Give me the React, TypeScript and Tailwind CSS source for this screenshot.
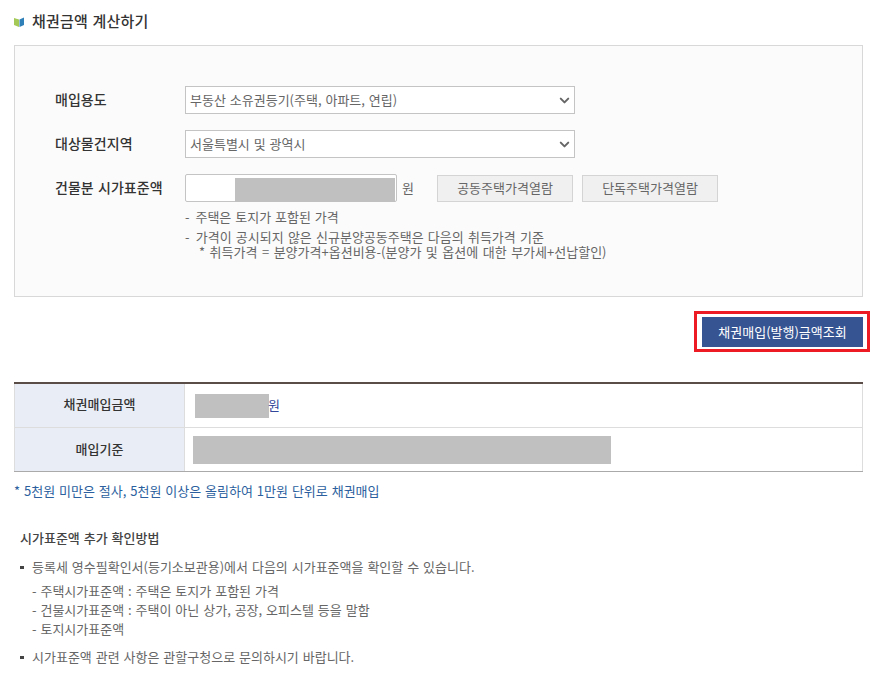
import { ChevronDown } from 'lucide-react'

const font = { fontFamily: '"Noto Sans CJK KR", "Noto Sans", sans-serif' }

function SelectBox({ value }: { value: string }) {
  return (
    <div className="flex h-[28px] w-[390px] items-center justify-between border border-[#c4c4c4] bg-white pl-[4px] pr-[2px] text-[13px] text-[#666]">
      <span>{value}</span>
      <ChevronDown size={15} strokeWidth={3.2} className="text-[#666]" />
    </div>
  )
}

function Label({ children }: { children: string }) {
  return <div className="w-[130px] shrink-0 pb-[1px] text-[14px] font-medium tracking-[0.05px] text-[#333]">{children}</div>
}

function Blocked({ className }: { className: string }) {
  return <div className={`bg-[#c0c0c0] ${className}`} />
}

export default function App() {
  return (
    <div className="h-[686px] w-[881px] overflow-hidden bg-white pl-[14px] pr-[18px] pt-[11px] text-[#555] [word-spacing:1px]" style={font}>
      <div className="flex h-[21px] items-center">
        <svg width="11" height="10" viewBox="0 0 11 10" className="mr-[7px]">
          <path d="M0 1 L5 2.5 V10 L0 8 Z" fill="#a4c957" />
          <path d="M5.5 2.5 L10 0.5 V8 L5.5 10 Z" fill="#2f7fb8" />
        </svg>
        <h2 className="text-[15px] font-medium tracking-[0.2px] text-[#333]">채권금액 계산하기</h2>
      </div>

      <div className="mt-[13px] h-[252px] border border-[#d8d8d8] bg-[#fbfbfb] pl-[40px] pt-[40px]">
        <div className="flex items-center">
          <Label>매입용도</Label>
          <SelectBox value="부동산 소유권등기(주택, 아파트, 연립)" />
        </div>
        <div className="mt-[16px] flex items-center">
          <Label>대상물건지역</Label>
          <SelectBox value="서울특별시 및 광역시" />
        </div>
        <div className="mt-[16px] flex items-center">
          <Label>건물분 시가표준액</Label>
          <div className="relative h-[28px] w-[212px] rounded-[2px] border border-[#c4c4c4] bg-white">
            <Blocked className="absolute left-[49px] top-[3px] h-[24px] w-[160px]" />
          </div>
          <span className="ml-[5px] w-[35px] pb-[1px] text-[13px] text-[#666]">원</span>
          <button className="h-[27px] w-[136px] border border-[#d4d4d4] bg-[#f0f0f0] pb-[1px] text-[13px] text-[#666]">공동주택가격열람</button>
          <button className="ml-[9px] h-[27px] w-[136px] border border-[#d4d4d4] bg-[#f0f0f0] pb-[1px] text-[13px] text-[#666]">단독주택가격열람</button>
        </div>
        <div className="ml-[130px] mt-[7px] text-[13px] leading-[15px] text-[#666]">
          <p>- <span className="ml-[2px]">주택은 토지가 포함된 가격</span></p>
          <p className="mt-[5px] [word-spacing:1.3px]">- <span className="ml-[2px]">가격이 공시되지 않은 신규분양공동주택은 다음의 취득가격 기준</span></p>
          <p className="pl-[14px] [word-spacing:1.6px]">* 취득가격 = 분양가격+옵션비용-(분양가 및 옵션에 대한 부가세+선납할인)</p>
        </div>
      </div>

      <div className="mt-[20px] flex justify-end">
        <div className="relative">
          <button className="h-[30px] w-[161px] bg-[#375492] text-[13px] text-white">채권매입(발행)금액조회</button>
          <div className="absolute -left-[8px] -right-[7px] -top-[6px] -bottom-[5px] border-[3px] border-[#ed1c24]" />
        </div>
      </div>

      <div className="mt-[35px] border-b border-t-2 border-b-[#aaa] border-t-[#5a4d48] text-[13px]">
        <div className="flex h-[44px] border-b border-[#ddd]">
          <div className="flex w-[171px] items-center justify-center border-x border-[#ddd] bg-[#e9edf5] pb-[3px] font-medium text-[#333]">채권매입금액</div>
          <div className="flex flex-1 items-center border-r border-[#ddd] pl-[10px] text-[#33479a]">
            <Blocked className="h-[24px] w-[74px]" />
            <span className="-ml-[1px] pb-[1px]">원</span>
          </div>
        </div>
        <div className="flex h-[43px]">
          <div className="flex w-[171px] items-center justify-center border-x border-[#ddd] bg-[#e9edf5] pb-[2px] font-medium text-[#333]">매입기준</div>
          <div className="flex flex-1 items-center border-r border-[#ddd] pl-[8px]">
            <Blocked className="h-[28px] w-[418px]" />
          </div>
        </div>
      </div>

      <p className="mt-[11px] text-[13px] leading-[16px] text-[#2c5f9e]">* 5천원 미만은 절사, 5천원 이상은 올림하여 1만원 단위로 채권매입</p>

      <div className="mt-[31px] pl-[6px] text-[13px] text-[#666]">
        <h3 className="font-medium leading-[16px] text-[#444]">시가표준액 추가 확인방법</h3>
        <div className="mt-[13px] flex items-center leading-[16px]">
          <span className="mr-[8px] h-[3px] w-[4px] bg-[#444]" />
          <span>등록세 영수필확인서(등기소보관용)에서 다음의 시가표준액을 확인할 수 있습니다.</span>
        </div>
        <ul className="mt-[6px] pl-[12px] leading-[19px]">
          <li>- 주택시가표준액 : 주택은 토지가 포함된 가격</li>
          <li>- 건물시가표준액 : 주택이 아닌 상가, 공장, 오피스텔 등을 말함</li>
          <li>- 토지시가표준액</li>
        </ul>
        <div className="mt-[11px] flex items-center leading-[16px]">
          <span className="mr-[8px] h-[3px] w-[4px] bg-[#444]" />
          <span>시가표준액 관련 사항은 관할구청으로 문의하시기 바랍니다.</span>
        </div>
      </div>
    </div>
  )
}
